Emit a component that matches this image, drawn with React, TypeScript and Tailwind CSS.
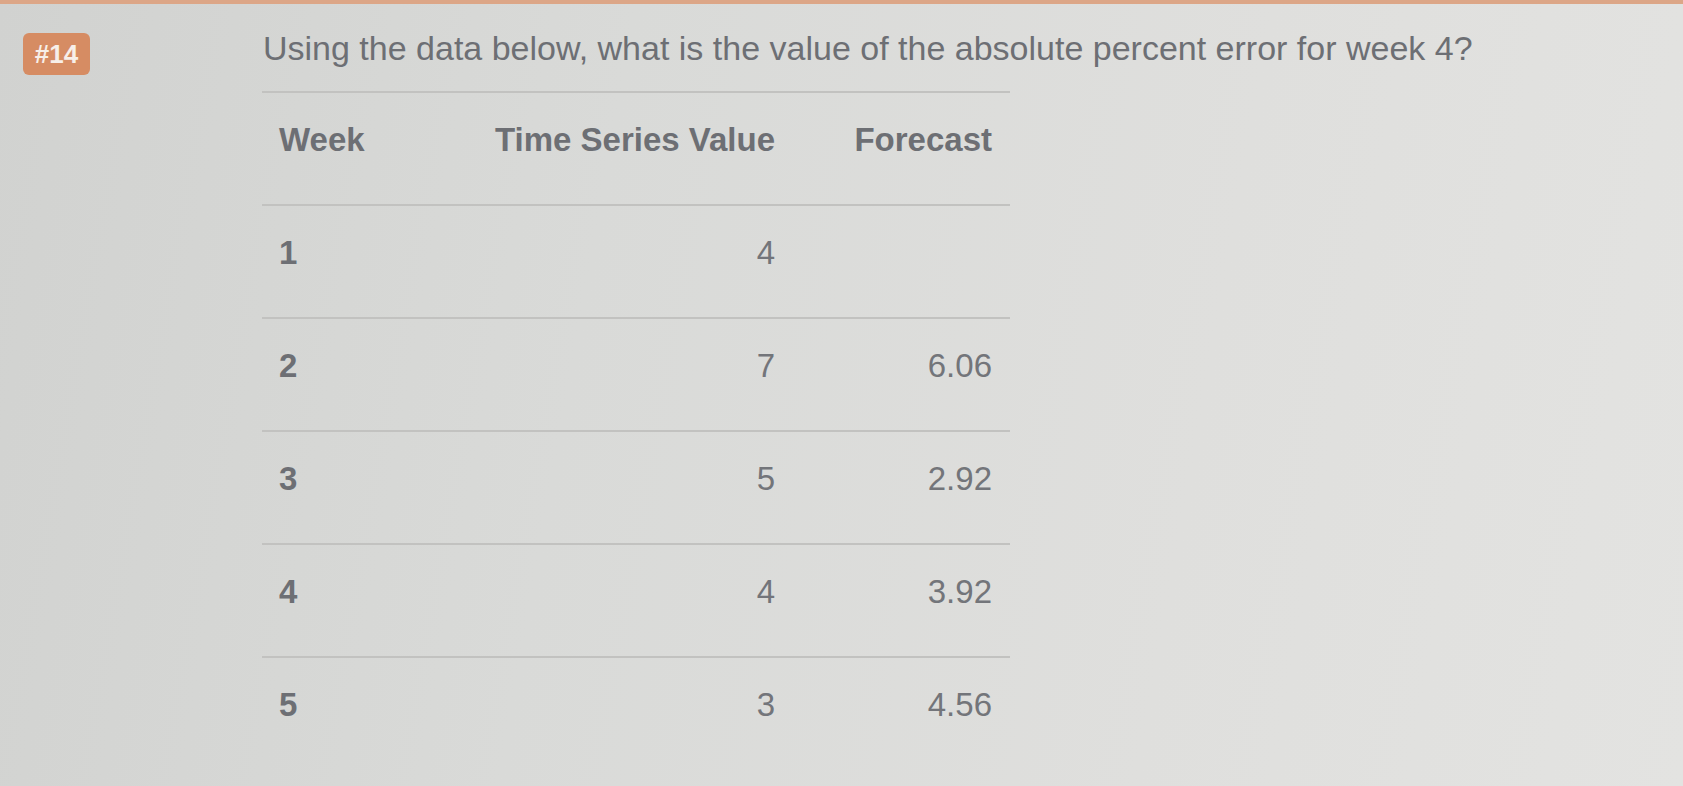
import React from "react";

const rows = [
  { week: "1", value: "4", forecast: "" },
  { week: "2", value: "7", forecast: "6.06" },
  { week: "3", value: "5", forecast: "2.92" },
  { week: "4", value: "4", forecast: "3.92" },
  { week: "5", value: "3", forecast: "4.56" },
];

function Row({ a, b, c, head }: { a: string; b: string; c: string; head?: boolean }) {
  return (
    <div className="border-t-2 border-[#c2c2c0] pt-[27px] pb-[44px] px-[17px] grid grid-cols-[200px_296px_217px] text-[33px] leading-[40px]">
      <div className="font-bold text-[#6d6f74]">{a}</div>
      <div className={`text-right ${head ? "font-bold text-[#6d6f74]" : "text-[#73757a]"}`}>{b}</div>
      <div className={`text-right ${head ? "font-bold text-[#6d6f74]" : "text-[#73757a]"}`}>{c}</div>
    </div>
  );
}

export default function App() {
  return (
    <div
      className="w-[1683px] h-[786px] overflow-hidden bg-[linear-gradient(100deg,#d1d2d0_0%,#d9dad8_35%,#dfdfdd_70%,#e3e3e1_100%)]"
      style={{ fontFamily: '"Liberation Sans", Arial, sans-serif' }}
    >
      <div className="h-[4px] bg-[#dca687]" />
      <div className="pl-[23px] pt-[24px] flex items-start">
        <div className="mt-[5px] w-[67px] h-[42px] rounded-[6px] bg-[#d68c63] flex items-center justify-center text-[26px] font-bold text-[#f7efe9]">
          #14
        </div>
        <div className="ml-[173px] text-[34px] leading-[40px] text-[#6d6f74]">
          Using the data below, what is the value of the absolute percent error for week 4?
        </div>
      </div>
      <div className="ml-[262px] mt-[16px] w-[748px]">
        <Row a="Week" b="Time Series Value" c="Forecast" head />
        {rows.map((r) => (
          <Row key={r.week} a={r.week} b={r.value} c={r.forecast} />
        ))}
      </div>
    </div>
  );
}
